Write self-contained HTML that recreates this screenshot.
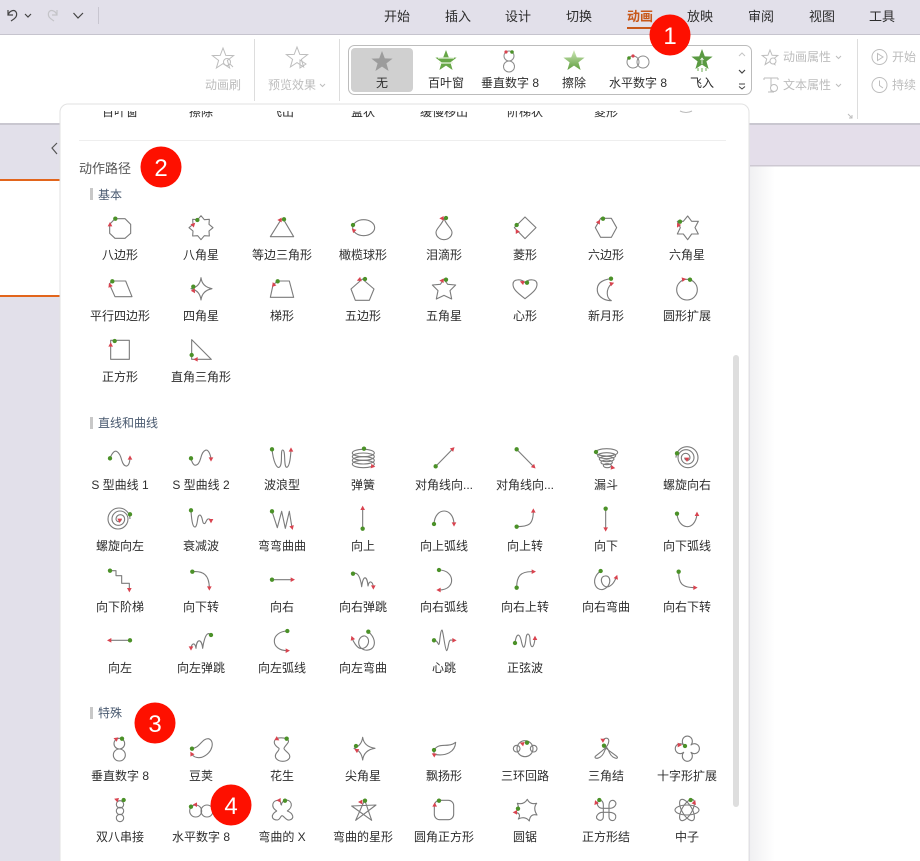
<!DOCTYPE html>
<html lang="zh-CN"><head><meta charset="utf-8"><title>动画</title>
<style>
html,body{margin:0;padding:0;background:#fff;width:920px;height:861px;overflow:hidden}
svg{display:block;font-family:"Liberation Sans","Noto Sans CJK SC",sans-serif}
.l text{font-size:12px;fill:#2d2d2d;text-anchor:middle}
.p{fill:none;stroke:#7b7b7b;stroke-width:3.3;stroke-linejoin:round}
.g{fill:#4b9128}
.a{fill:#d9434f}
.h{font-size:12px;fill:#4a5a70}
.d{font-size:12px;fill:#bdbdbd}
.i{fill:none;stroke:#bdbdbd;stroke-width:1}
.b{fill:#fff;font-size:24px;text-anchor:middle}
</style></head><body>
<svg width="920" height="861" viewBox="0 0 920 861" xmlns="http://www.w3.org/2000/svg">
<defs>
<polygon id="a" class="a" points="0,-8 7,5 -7,5"/>
<polygon id="s" points="0,-11 2.8,-3.6 10.6,-3.4 4.4,1.4 6.6,9 0,4.6 -6.6,9 -4.4,1.4 -10.6,-3.4 -2.8,-3.6"/>
<polygon id="t" points="0,-8 2.1,-2.7 7.8,-2.5 3.3,1 4.9,6.6 0,3.4 -4.9,6.6 -3.3,1 -7.8,-2.5 -2.100,-2.7"/>
<clipPath id="c"><rect x="60" y="111" width="689" height="8"/></clipPath>
<linearGradient id="lg" x1="0" y1="0" x2="0" y2="1"><stop offset="0" stop-color="#cfe8b8"/><stop offset="1" stop-color="#5f9e3e"/></linearGradient>
<linearGradient id="fade" x1="0" y1="0" x2="1" y2="0"><stop offset="0" stop-color="#f0f0f2"/><stop offset="1" stop-color="#fff"/></linearGradient>
</defs>

<!-- backgrounds -->
<rect width="920" height="861" fill="#e2e0ea"/>
<rect x="750" y="123" width="170" height="43" fill="#e4deea"/>
<rect x="750" y="166" width="170" height="695" fill="#fff"/>
<rect x="750" y="166" width="25" height="695" fill="url(#fade)"/>
<rect x="750" y="165" width="170" height="1.5" fill="#cdc8d2"/>
<rect x="0" y="180" width="60" height="116" fill="#fff"/>
<rect x="0" y="179" width="60" height="2" fill="#e2651c"/>
<rect x="0" y="295" width="60" height="2" fill="#e2651c"/>
<path d="M57,143 L52,148 L57,154" fill="none" stroke="#555" stroke-width="1.2"/>

<!-- ribbon -->
<rect x="0" y="35" width="920" height="88" fill="#fff"/>
<rect x="0" y="34" width="920" height="1" fill="#c6c4ce"/>
<rect x="0" y="123" width="920" height="2" fill="#c9c7d0"/>

<!-- quick access -->
<g fill="none" stroke="#444" stroke-width="1.2">
<path d="M8,10 V15 H13 M8,15 C10,10 15,9 16.5,13 C17.5,17 14,19 11,21"/>
<path d="M25,14 L28,17 L31,14"/>
<path d="M57,10 V15 H52 M57,15 C55,10 50,9 48.5,13 C47.5,17 51,19 54,21" stroke="#c4c4c8"/>
<path d="M73.500,13 L78,18 L83,13"/>
</g>
<rect x="98" y="7" width="1" height="17" fill="#c8c6d0"/>

<!-- tabs -->
<g font-size="13" fill="#2d2d2d" text-anchor="middle">
<text x="397" y="21">开始</text><text x="458" y="21">插入</text><text x="518" y="21">设计</text><text x="579" y="21">切换</text>
<text x="640" y="21" fill="#c8581a" font-weight="bold">动画</text>
<text x="700" y="21">放映</text><text x="761" y="21">审阅</text><text x="822" y="21">视图</text><text x="882" y="21">工具</text>
</g>
<rect x="627" y="27" width="27" height="2" fill="#c8581a"/>

<!-- ribbon left groups -->
<use href="#s" x="223" y="59" fill="#fff" stroke="#bdbdbd"/>
<circle cx="227" cy="62" r="3.500" class="i" fill="#fff"/><path d="M230,64 L233,67" class="i"/>
<text x="223" y="89" class="d" text-anchor="middle">动画刷</text>
<rect x="254" y="39" width="1" height="62" fill="#ddd"/>
<use href="#s" x="297" y="58" fill="#fff" stroke="#bdbdbd"/>
<path d="M300,60 L306,64 L300,68Z" class="i" fill="#fff"/>
<text x="268" y="89" class="d">预览效果</text>
<path d="M320,84 L322.500,86.500 L325,84" class="i"/>
<rect x="339" y="39" width="1" height="62" fill="#ddd"/>

<!-- gallery -->
<rect x="348.500" y="45.500" width="403" height="49" rx="6" fill="#fff" stroke="#bcbcbc"/>
<rect x="351" y="48" width="62" height="44" rx="4" fill="#d0d0d0"/>
<use href="#s" x="382" y="62" fill="#9c9c9c"/>
<use href="#s" x="446" y="61" fill="#67a747"/>
<path d="M438,58 H454 M439,63 H453" stroke="#e6f2dc" stroke-width="1.300"/>
<circle cx="509" cy="56" r="5" fill="none" stroke="#8c8c8c"/><circle cx="509" cy="66.500" r="5.500" fill="none" stroke="#8c8c8c"/>
<circle cx="512" cy="52" r="1.800" class="g"/><circle cx="506" cy="52" r="1.600" class="a"/>
<use href="#s" x="574" y="61" fill="url(#lg)"/>
<circle cx="633" cy="62" r="6" fill="none" stroke="#8c8c8c"/><circle cx="643" cy="62" r="6" fill="none" stroke="#8c8c8c"/>
<circle cx="629" cy="58" r="1.800" class="g"/><circle cx="633" cy="56" r="1.600" class="a"/>
<use href="#s" x="702" y="60" fill="#5a9a42"/>
<path d="M702,64 V58 M700.500,60 L702,58 L703.500,60" stroke="#fff" fill="none" stroke-width=".8"/>
<path d="M698,68 V71 M702,68 V72 M706,68 V71" stroke="#6aa84f"/>
<g font-size="12" fill="#2d2d2d" text-anchor="middle">
<text x="382" y="87">无</text><text x="446" y="87">百叶窗</text><text x="510" y="87">垂直数字 8</text><text x="574" y="87">擦除</text><text x="638" y="87">水平数字 8</text><text x="702" y="87">飞入</text>
</g>
<path d="M739,56 L742,53 L745,56" fill="none" stroke="#c4c4c4"/>
<path d="M739,70 L742,73 L745,70" fill="none" stroke="#444" stroke-width="1.200"/>
<path d="M739,84 H745 M739,86.500 L742,89 L745,86.500" fill="none" stroke="#444"/>

<!-- ribbon right groups -->
<use href="#t" x="770" y="58" fill="#fff" stroke="#bdbdbd"/>
<circle cx="773" cy="61" r="3" fill="#fff" stroke="#bdbdbd"/>
<text x="783" y="61" class="d">动画属性</text>
<path d="M836,56 L838.500,58.500 L841,56" class="i"/>
<path d="M764,78 H778 M771,78 V92 M768,92 H774 M764,78 V80 M778,78 V80" class="i"/>
<circle cx="774" cy="88" r="3.500" fill="#fff" stroke="#bdbdbd"/>
<text x="783" y="89" class="d">文本属性</text>
<path d="M836,84 L838.500,86.500 L841,84" class="i"/>
<path d="M848,114 L852,118 M852,115 V118 H849" class="i"/>
<rect x="857" y="39" width="1" height="80" fill="#ddd"/>
<circle cx="879.500" cy="57" r="7.500" class="i"/><path d="M877.500,53.500 L883,57 L877.500,60.500Z" class="i"/>
<text x="892" y="61" class="d">开始</text>
<circle cx="879.500" cy="85" r="7.500" class="i"/><path d="M879.500,80.500 V85.500 L883,88" class="i"/>
<text x="892" y="89" class="d">持续</text>

<!-- panel -->
<rect x="60" y="104" width="689" height="780" rx="8" fill="#fff" stroke="#e2e2e2"/>
<g class="l" clip-path="url(#c)">
<text x="120" y="116">百叶窗</text><text x="201" y="116">擦除</text><text x="282" y="116">飞出</text><text x="363" y="116">盒状</text><text x="444" y="116">缓慢移出</text><text x="525" y="116">阶梯状</text><text x="606" y="116">菱形</text>
</g>
<path d="M680,111 Q686,114 692,111" fill="none" stroke="#bbb"/>
<rect x="79" y="140" width="647" height="1" fill="#eeeeee"/>
<text x="79" y="173" font-size="13" fill="#555">动作路径</text>

<rect x="90" y="188" width="3" height="12" fill="#c8c8c8"/><text x="98" y="199" class="h">基本</text>
<rect x="90" y="417" width="3" height="12" fill="#c8c8c8"/><text x="98" y="427" class="h">直线和曲线</text>
<rect x="90" y="707" width="3" height="12" fill="#c8c8c8"/><text x="98" y="717" class="h">特殊</text>

<rect x="733" y="355" width="6" height="452" rx="3" fill="#dedede"/>

<!-- labels -->
<g class="l">
<text x="120" y="259">八边形</text><text x="201" y="259">八角星</text><text x="282" y="259">等边三角形</text><text x="363" y="259">橄榄球形</text><text x="444" y="259">泪滴形</text><text x="525" y="259">菱形</text><text x="606" y="259">六边形</text><text x="687" y="259">六角星</text>
<text x="120" y="320">平行四边形</text><text x="201" y="320">四角星</text><text x="282" y="320">梯形</text><text x="363" y="320">五边形</text><text x="444" y="320">五角星</text><text x="525" y="320">心形</text><text x="606" y="320">新月形</text><text x="687" y="320">圆形扩展</text>
<text x="120" y="381">正方形</text><text x="201" y="381">直角三角形</text>
<text x="120" y="489">S 型曲线 1</text><text x="201" y="489">S 型曲线 2</text><text x="282" y="489">波浪型</text><text x="363" y="489">弹簧</text><text x="444" y="489">对角线向...</text><text x="525" y="489">对角线向...</text><text x="606" y="489">漏斗</text><text x="687" y="489">螺旋向右</text>
<text x="120" y="550">螺旋向左</text><text x="201" y="550">衰减波</text><text x="282" y="550">弯弯曲曲</text><text x="363" y="550">向上</text><text x="444" y="550">向上弧线</text><text x="525" y="550">向上转</text><text x="606" y="550">向下</text><text x="687" y="550">向下弧线</text>
<text x="120" y="611">向下阶梯</text><text x="201" y="611">向下转</text><text x="282" y="611">向右</text><text x="363" y="611">向右弹跳</text><text x="444" y="611">向右弧线</text><text x="525" y="611">向右上转</text><text x="606" y="611">向右弯曲</text><text x="687" y="611">向右下转</text>
<text x="120" y="672">向左</text><text x="201" y="672">向左弹跳</text><text x="282" y="672">向左弧线</text><text x="363" y="672">向左弯曲</text><text x="444" y="672">心跳</text><text x="525" y="672">正弦波</text>
<text x="120" y="780">垂直数字 8</text><text x="201" y="780">豆荚</text><text x="282" y="780">花生</text><text x="363" y="780">尖角星</text><text x="444" y="780">飘扬形</text><text x="525" y="780">三环回路</text><text x="606" y="780">三角结</text><text x="687" y="780">十字形扩展</text>
<text x="120" y="841">双八串接</text><text x="201" y="841">水平数字 8</text><text x="282" y="841">弯曲的 X</text><text x="363" y="841">弯曲的星形</text><text x="444" y="841">圆角正方形</text><text x="525" y="841">圆锯</text><text x="606" y="841">正方形结</text><text x="687" y="841">中子</text>
</g>

<!-- icons: basic left -->
<g transform="translate(80,205) scale(.33333)">
<polygon class="p" points="105,41 135,41 152,58 152,85 135,100 105,100 89,85 89,58"/><circle cx="106" cy="41" r="6.500" class="g"/><use href="#a" transform="translate(90,59)"/>
<polygon class="p" points="363,32 373,44 388,43 387,58 399,68 387,78 388,93 373,92 363,104 353,92 338,93 339,78 327,68 339,58 338,43 353,44"/><circle cx="352" cy="45" r="6.500" class="g"/><use href="#a" transform="translate(340,59) rotate(45)"/>
<polygon class="p" points="571,95 641,95 611,44 603,44"/><circle cx="612" cy="43" r="6.500" class="g"/><use href="#a" transform="translate(600,45) rotate(-90)"/>
<ellipse class="p" cx="851" cy="68" rx="33" ry="24"/><circle cx="819" cy="60" r="6.500" class="g"/><use href="#a" transform="translate(821,76) rotate(-45)"/>
<polygon class="p" points="97,228 137,228 156,275 105,275 88,237"/><circle cx="97" cy="229" r="6.500" class="g"/><use href="#a" transform="translate(90,241) rotate(-20)"/>
<path class="p" d="M363,218 Q366,245 396,251 Q366,257 363,285 Q360,257 333,251 Q360,245 363,218Z"/><circle cx="340" cy="245" r="6.500" class="g"/><use href="#a" transform="translate(341,258) rotate(150)"/>
<polygon class="p" points="593,228 628,228 641,277 571,277 579,240"/><circle cx="593" cy="229" r="6.500" class="g"/><use href="#a" transform="translate(581,239) rotate(-20)"/>
<polygon class="p" points="847,222 882,252 868,286 826,286 813,252"/><circle cx="855" cy="222" r="6.500" class="g"/><use href="#a" transform="translate(838,224) rotate(-110)"/>
<rect class="p" x="92" y="406" width="56" height="57"/><circle cx="104" cy="408" r="6.500" class="g"/><use href="#a" transform="translate(92,420)"/>
<polygon class="p" points="335,404 394,463 335,463"/><circle cx="335" cy="450" r="6.500" class="g"/><use href="#a" transform="translate(348,463) rotate(-90)"/>
</g>
<!-- icons: basic right -->
<g transform="translate(410,205) scale(.33333)">
<path class="p" d="M102,40 C108,60 126,70 126,82 A24,22 0 1 1 78,82 C78,70 96,60 102,40Z"/><circle cx="108" cy="39" r="6.500" class="g"/><use href="#a" transform="translate(96,40) rotate(-90)"/>
<polygon class="p" points="345,36 378,68 345,101 313,68"/><circle cx="320" cy="60" r="6.500" class="g"/><use href="#a" transform="translate(321,79) rotate(-30)"/>
<polygon class="p" points="572,40 604,40 620,68 604,97 572,97 556,68"/><circle cx="579" cy="41" r="6.500" class="g"/><use href="#a" transform="translate(566,51) rotate(30)"/>
<polygon class="p" points="833,33 845,49 865,49 855,68 865,87 845,87 833,104 820,87 802,87 811,68 802,49 820,49"/><circle cx="810" cy="50" r="6.500" class="g"/><use href="#a" transform="translate(805,61) rotate(-150)"/>
<polygon class="p" points="102,223 113,238 137,240 120,257 125,282 102,271 79,282 84,257 67,240 91,238"/><circle cx="108" cy="224" r="6.500" class="g"/><use href="#a" transform="translate(96,227) rotate(-90)"/>
<path class="p" d="M345,281 C320,262 309,252 309,238 C309,220 335,222 345,233 C355,222 381,220 381,238 C381,252 370,262 345,281Z"/><circle cx="351" cy="233" r="6.500" class="g"/><use href="#a" transform="translate(337,232) rotate(-70)"/>
<path class="p" d="M603,221 C570,225 560,240 562,258 C565,280 590,287 604,287 C590,280 585,255 605,235"/><circle cx="603" cy="221" r="6.500" class="g"/><use href="#a" transform="translate(605,236) rotate(70)"/>
<circle class="p" cx="831" cy="254" r="31"/><circle cx="840" cy="224" r="6.500" class="g"/><use href="#a" transform="translate(821,223) rotate(80)"/>
</g>
<!-- lines left -->
<g transform="translate(80,435) scale(.33333)">
<path class="p" d="M90,70 C105,30 120,55 125,75 C132,100 148,100 150,70"/><circle cx="90" cy="70" r="6.500" class="g"/><use href="#a" transform="translate(150,69)"/>
<path class="p" d="M333,70 C340,100 355,95 362,70 C368,45 385,30 393,70"/><circle cx="333" cy="70" r="6.500" class="g"/><use href="#a" transform="translate(393,72) rotate(180)"/>
<path class="p" d="M576,43 C580,80 590,100 597,97 C610,92 600,45 608,45 C618,45 610,95 620,97 C630,95 632,60 633,45"/><circle cx="576" cy="43" r="6.500" class="g"/><use href="#a" transform="translate(633,45)"/>
<ellipse class="p" cx="850" cy="54" rx="33" ry="11"/><ellipse class="p" cx="850" cy="65" rx="33" ry="11"/><ellipse class="p" cx="850" cy="76" rx="33" ry="11"/><ellipse class="p" cx="850" cy="87" rx="33" ry="11"/><circle cx="852" cy="41" r="6.500" class="g"/><use href="#a" transform="translate(878,94) rotate(100)"/>
<path class="p" d="M150,252 A33,33 0 0 0 84,252 A30,30 0 0 0 144,252 A24,24 0 0 0 96,252 A19,19 0 0 0 134,252 A13,13 0 0 0 108,252 A8,8 0 0 0 124,252"/><circle cx="150" cy="238" r="6.500" class="g"/><use href="#a" transform="translate(119,256) rotate(180)"/>
<path class="p" d="M333,226 C335,265 340,280 347,275 C355,265 350,240 360,240 C370,245 365,270 375,265 C380,260 380,245 393,255"/><circle cx="333" cy="226" r="6.500" class="g"/><use href="#a" transform="translate(393,257) rotate(180)"/>
<path class="p" d="M576,229 L592,278 L605,229 L616,280 L628,229 L636,278"/><circle cx="576" cy="229" r="6.500" class="g"/><use href="#a" transform="translate(636,277) rotate(165)"/>
<path class="p" d="M848,220 V281"/><circle cx="848" cy="281" r="6.500" class="g"/><use href="#a" transform="translate(848,220)"/>
</g>
<!-- lines right -->
<g transform="translate(410,435) scale(.33333)">
<path class="p" d="M77,94 L128,42"/><circle cx="77" cy="94" r="6.500" class="g"/><use href="#a" transform="translate(128,42) rotate(45)"/>
<path class="p" d="M320,43 L371,95"/><circle cx="320" cy="43" r="6.500" class="g"/><use href="#a" transform="translate(371,95) rotate(135)"/>
<ellipse class="p" cx="590" cy="52" rx="33" ry="11"/><ellipse class="p" cx="590" cy="62" rx="27" ry="9"/><ellipse class="p" cx="590" cy="72" rx="22" ry="8"/><ellipse class="p" cx="590" cy="82" rx="17" ry="7"/><ellipse class="p" cx="592" cy="92" rx="12" ry="6"/><circle cx="558" cy="51" r="6.500" class="g"/><use href="#a" transform="translate(608,98) rotate(100)"/>
<path class="p" d="M798,68 A33,33 0 0 1 864,68 A30,30 0 0 1 804,68 A24,24 0 0 1 852,68 A19,19 0 0 1 814,68 A13,13 0 0 1 840,68 A8,8 0 0 1 824,68"/><circle cx="801" cy="55" r="6.500" class="g"/><use href="#a" transform="translate(831,73) rotate(180)"/>
<path class="p" d="M72,267 C75,215 130,215 132,267"/><circle cx="72" cy="267" r="6.500" class="g"/><use href="#a" transform="translate(132,267) rotate(180)"/>
<path class="p" d="M320,275 C355,275 370,270 370,228"/><circle cx="320" cy="275" r="6.500" class="g"/><use href="#a" transform="translate(370,228)"/>
<path class="p" d="M587,221 V282"/><circle cx="587" cy="221" r="6.500" class="g"/><use href="#a" transform="translate(587,282) rotate(180)"/>
<path class="p" d="M801,236 C805,285 855,290 861,238"/><circle cx="801" cy="236" r="6.500" class="g"/><use href="#a" transform="translate(861,238)"/>
</g>
<g transform="translate(80,560) scale(.33333)">
<path class="p" d="M90,32 H108 V47 H125 V70 H148 V88"/><circle cx="90" cy="32" r="6.500" class="g"/><use href="#a" transform="translate(148,89) rotate(180)"/>
<path class="p" d="M337,35 C370,32 388,45 388,85"/><circle cx="337" cy="35" r="6.500" class="g"/><use href="#a" transform="translate(388,84) rotate(180)"/>
<path class="p" d="M576,59 H637"/><circle cx="576" cy="59" r="6.500" class="g"/><use href="#a" transform="translate(637,59) rotate(90)"/>
<path class="p" d="M819,41 C840,30 845,80 845,80 C850,40 862,50 864,78 C868,58 878,65 880,80"/><circle cx="819" cy="41" r="6.500" class="g"/><use href="#a" transform="translate(880,81) rotate(180)"/>
<path class="p" d="M89,241 H150"/><circle cx="150" cy="241" r="6.500" class="g"/><use href="#a" transform="translate(89,241) rotate(-90)"/>
<path class="p" d="M393,225 C375,205 368,265 368,265 C365,235 350,235 348,265 C345,245 335,250 333,265"/><circle cx="393" cy="225" r="6.500" class="g"/><use href="#a" transform="translate(333,264) rotate(180)"/>
<path class="p" d="M622,213 C570,215 570,272 622,272"/><circle cx="622" cy="213" r="6.500" class="g"/><use href="#a" transform="translate(622,272) rotate(90)"/>
<path class="p" d="M865,215 C895,240 885,275 855,270 C825,262 835,225 855,228 C875,235 865,270 840,265 C830,262 820,245 817,236"/><circle cx="865" cy="215" r="6.500" class="g"/><use href="#a" transform="translate(817,235) rotate(-20)"/>
</g>
<g transform="translate(410,560) scale(.33333)">
<path class="p" d="M87,30 C135,30 140,90 87,90"/><circle cx="87" cy="30" r="6.500" class="g"/><use href="#a" transform="translate(87,90) rotate(-90)"/>
<path class="p" d="M320,83 C320,50 330,33 370,35"/><circle cx="320" cy="83" r="6.500" class="g"/><use href="#a" transform="translate(370,35) rotate(90)"/>
<path class="p" d="M572,33 C540,55 555,95 580,88 C605,80 605,45 585,48 C565,50 575,85 595,80 C610,75 615,60 620,50"/><circle cx="572" cy="33" r="6.500" class="g"/><use href="#a" transform="translate(619,52) rotate(20)"/>
<path class="p" d="M806,35 C806,70 815,83 855,83"/><circle cx="806" cy="35" r="6.500" class="g"/><use href="#a" transform="translate(855,83) rotate(90)"/>
<path class="p" d="M72,241 C85,240 85,262 88,250 C90,235 92,210 96,210 C100,215 105,270 110,272 C115,270 115,240 122,240 L132,241"/><circle cx="72" cy="241" r="6.500" class="g"/><use href="#a" transform="translate(132,241) rotate(90)"/>
<path class="p" d="M315,248 C320,215 330,220 335,248 C340,270 345,265 348,235 C350,215 360,220 360,240 C362,270 372,265 375,235"/><circle cx="315" cy="249" r="6.500" class="g"/><use href="#a" transform="translate(375,235)"/>
</g>
<!-- special left -->
<g transform="translate(80,725) scale(.33333)">
<circle class="p" cx="118" cy="56" r="16"/><circle class="p" cx="118" cy="90" r="18"/><circle cx="126" cy="41" r="6.500" class="g"/><use href="#a" transform="translate(108,42) rotate(-70)"/>
<path class="p" d="M335,70 C360,70 365,40 385,41 C405,45 400,85 365,97 C350,100 340,95 335,87"/><circle cx="336" cy="71" r="6.500" class="g"/><use href="#a" transform="translate(335,87) rotate(-30)"/>
<path class="p" d="M591,40 C575,50 585,62 597,70 C600,78 580,85 588,100 C597,112 620,112 628,100 C635,85 612,78 612,70 C615,60 635,50 620,41 C610,38 600,38 591,40Z"/><circle cx="620" cy="41" r="6.500" class="g"/><use href="#a" transform="translate(591,42) rotate(120)"/>
<path class="p" d="M848,37 Q852,65 885,70 Q852,75 848,105 Q845,78 822,70 Q845,62 848,37Z"/><circle cx="828" cy="63" r="6.500" class="g"/><use href="#a" transform="translate(830,76) rotate(-60)"/>
<circle class="p" cx="120" cy="238" r="11"/><circle class="p" cx="120" cy="258" r="11"/><circle class="p" cx="120" cy="279" r="11"/><circle cx="131" cy="225" r="6.500" class="g"/><use href="#a" transform="translate(110,224) rotate(-70)"/>
<circle class="p" cx="347" cy="258" r="18"/><circle class="p" cx="381" cy="258" r="18"/><circle cx="333" cy="245" r="6.500" class="g"/><use href="#a" transform="translate(346,239) rotate(-90)"/>
<path class="p" d="M596,226 C578,225 570,245 590,258 C570,270 575,285 592,285 C600,285 602,272 606,272 C612,272 618,288 628,285 C645,282 640,265 622,258 C642,245 635,222 615,226 C605,230 603,240 605,240 C600,240 605,226 596,226Z"/><circle cx="615" cy="227" r="6.500" class="g"/><use href="#a" transform="translate(597,226) rotate(-90)"/>
<path class="p" d="M854,225 L875,286 L815,243 L888,240 L827,286 Z"/><circle cx="855" cy="227" r="6.500" class="g"/><use href="#a" transform="translate(842,231) rotate(-90)"/>
</g>
<!-- special right -->
<g transform="translate(410,725) scale(.33333)">
<path class="p" d="M72,76 C85,50 115,70 137,52 C135,80 110,95 72,88 Z"/><circle cx="72" cy="75" r="6.500" class="g"/><use href="#a" transform="translate(72,89) rotate(-60)"/>
<circle class="p" cx="345" cy="71" r="24"/><circle class="p" cx="320" cy="71" r="10"/><circle class="p" cx="371" cy="71" r="10"/><circle cx="351" cy="53" r="6.500" class="g"/><use href="#a" transform="translate(337,56) rotate(-70)"/>
<path class="p" d="M578,45 C590,35 600,40 595,55 C590,70 570,82 556,94 C550,103 575,105 585,75 C590,65 590,65 595,75 C605,105 630,103 620,94 C605,82 585,70 582,62"/><circle cx="582" cy="62" r="6.500" class="g"/><use href="#a" transform="translate(578,45) rotate(-60)"/>
<path class="p" d="M821,60 A15,16 0 1 1 843,60 A15,15 0 1 1 843,82 A15,16 0 1 1 821,82 A15,15 0 1 1 821,60Z"/><circle cx="825" cy="63" r="6.500" class="g"/><use href="#a" transform="translate(808,60) rotate(90)"/>
<rect class="p" x="73" y="226" width="58" height="58" rx="16"/><circle cx="87" cy="227" r="6.500" class="g"/><use href="#a" transform="translate(74,240)"/>
<path class="p" d="M352,223 Q360,240 380,235 Q368,250 381,270 Q360,265 358,288 Q345,272 325,282 Q335,265 316,262 Q330,250 322,235 Q342,240 352,223Z"/><circle cx="324" cy="251" r="6.500" class="g"/><use href="#a" transform="translate(316,262) rotate(-90)"/>
<path class="p" d="M568,226 C555,235 565,250 578,250 H598 C612,250 620,240 617,232 C610,222 598,225 597,240 V275 C597,290 615,290 617,278 C620,265 605,262 598,262 H578 C565,262 555,275 562,282 C570,290 580,285 580,275 V240 C580,228 572,224 568,226"/><circle cx="568" cy="225" r="6.500" class="g"/><use href="#a" transform="translate(558,233) rotate(-20)"/>
<ellipse class="p" cx="831" cy="255" rx="36" ry="15"/><ellipse class="p" cx="831" cy="255" rx="36" ry="15" transform="rotate(60 831 255)"/><ellipse class="p" cx="831" cy="255" rx="36" ry="15" transform="rotate(-60 831 255)"/><circle cx="842" cy="225" r="6.500" class="g"/><use href="#a" transform="translate(853,233) rotate(20)"/>
</g>

<!-- badges -->
<circle cx="670" cy="35" r="20.500" fill="#fe1000"/><text x="670" y="44" class="b">1</text>
<circle cx="161" cy="167" r="20.500" fill="#fe1000"/><text x="161" y="176" class="b">2</text>
<circle cx="155" cy="723" r="20.500" fill="#fe1000"/><text x="155" y="732" class="b">3</text>
<circle cx="231" cy="805" r="20.500" fill="#fe1000"/><text x="231" y="814" class="b">4</text>
</svg>
</body></html>
